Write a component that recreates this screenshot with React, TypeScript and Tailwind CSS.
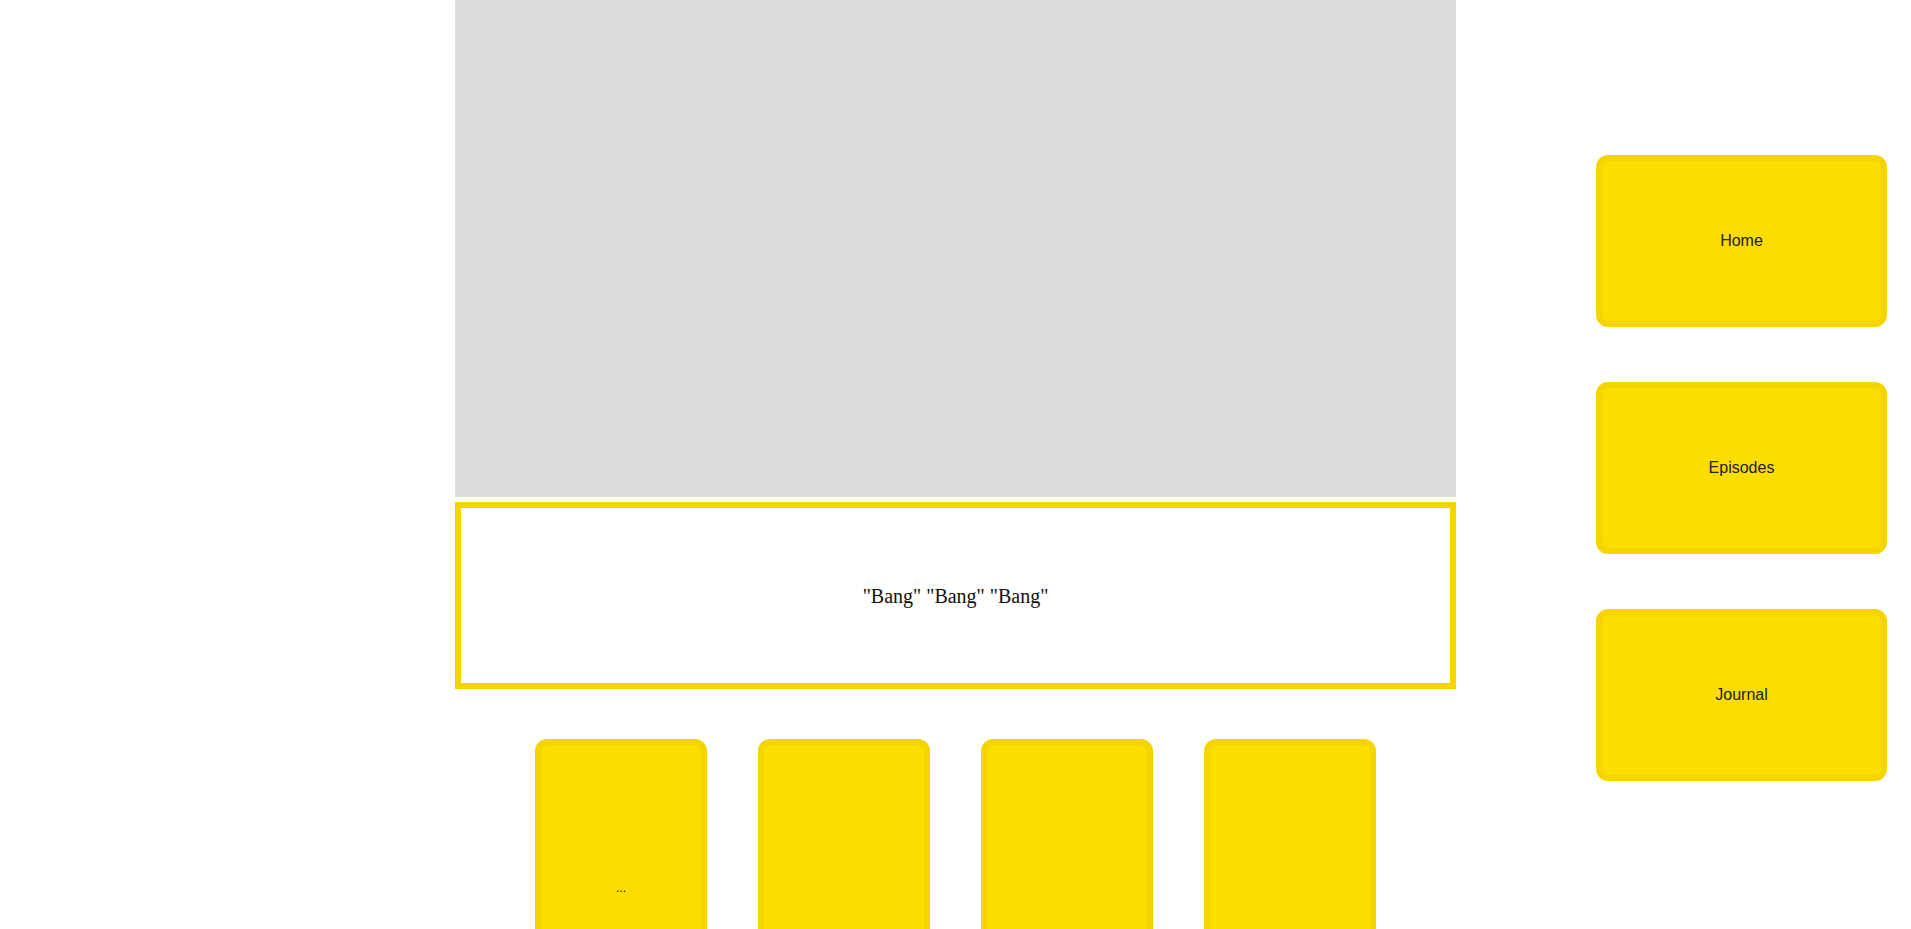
import React from 'react';

const navItems = ['Home', 'Episodes', 'Journal'];
const cards = ['...', '', '', ''];

export default function App() {
  return (
    <div className="grid min-h-screen grid-cols-[1fr_1001px_1fr] bg-white">
      <div />

      <main className="flex flex-col">
        <div className="h-[497px] w-full bg-[#dcdcdc]" />

        <div className="mt-[5px] flex h-[187px] items-center justify-center border-[6px] border-[#f5d400] bg-white">
          <p className="text-[20px] text-[#111]" style={{ fontFamily: '"Liberation Serif", "Times New Roman", serif' }}>
            "Bang" "Bang" "Bang"
          </p>
        </div>

        <div className="mt-[50px] flex justify-center gap-[51px]">
          {cards.map((label, i) => (
            <div
              key={i}
              className="flex h-[298px] w-[172px] items-center justify-center rounded-xl border-[6px] border-[#f5d400] bg-[#fddc00]"
            >
              <span className="text-[12px] text-black" style={{ fontFamily: '"Liberation Sans", Arial, sans-serif' }}>
                {label}
              </span>
            </div>
          ))}
        </div>
      </main>

      <aside className="flex justify-end pr-6 pt-[155px]">
        <nav className="flex flex-col gap-[55px]">
          {navItems.map((item) => (
            <button
              key={item}
              className="flex h-[172px] w-[291px] items-center justify-center rounded-xl border-[6px] border-[#f5d400] bg-[#fddc00] text-[16px] text-[#222]"
              style={{ fontFamily: '"Liberation Sans", Arial, sans-serif' }}
            >
              {item}
            </button>
          ))}
        </nav>
      </aside>
    </div>
  );
}
